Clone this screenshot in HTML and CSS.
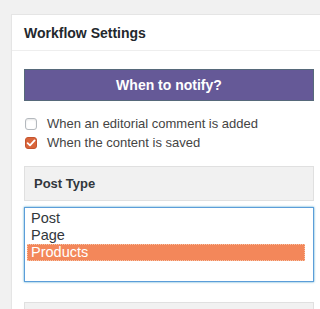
FILE: index.html
```
<!DOCTYPE html>
<html lang="en">
<head>
  <meta charset="UTF-8" />
  <title>Workflow Settings</title>
  <link rel="stylesheet" href="styles.css">
</head>
<body>
  <div class="postbox">
    <h2 class="postbox-title">Workflow Settings</h2>
    <div class="inside">
      <div class="section-bar">When to notify?</div>

      <div class="checks">
        <label class="check-row">
          <span class="checkbox"></span>
          When an editorial comment is added
        </label>
        <label class="check-row">
          <span class="checkbox checked">
            <svg width="10" height="10" viewBox="0 0 10 10"><path d="M1.6 5.2 L4 7.4 L8.6 2.4" fill="none" stroke="#fff" stroke-width="1.8" stroke-linecap="round" stroke-linejoin="round"/></svg>
          </span>
          When the content is saved
        </label>
      </div>

      <div class="field-head">Post Type</div>
      <div class="select-box">
        <div class="option">Post</div>
        <div class="option">Page</div>
        <div class="option selected">Products</div>
      </div>

      <div class="field-head next"></div>
    </div>
  </div>
</body>
</html>
```

FILE: styles.css
```
body {
  margin: 0;
  padding: 14px 0 0 11px;
  background: #f1f1f1;
  font-family: "Liberation Sans", Arial, sans-serif;
  color: #23282d;
  overflow: hidden;
  height: 309px;
  box-sizing: border-box;
}

.postbox {
  width: 314px;
  background: #fff;
  border: 1px solid #e5e5e5;
  box-shadow: 0 1px 1px rgba(0, 0, 0, 0.04);
}

.postbox-title {
  margin: 0;
  height: 35px;
  padding: 0 12px;
  display: flex;
  align-items: center;
  font-size: 14px;
  font-weight: bold;
  border-bottom: 1px solid #eee;
}

.inside {
  padding: 18px 12px 0;
}

.section-bar {
  height: 30px;
  display: flex;
  align-items: center;
  justify-content: center;
  background: #655997;
  border: 1px solid #56697a;
  color: #fff;
  font-size: 14px;
  font-weight: bold;
}

.checks {
  display: flex;
  flex-direction: column;
  padding: 13px 0 14px 1px;
}

.check-row {
  display: flex;
  align-items: center;
  height: 19px;
  font-size: 13px;
  color: #444;
}

.checkbox {
  width: 10px;
  height: 10px;
  border: 1px solid #b4b9be;
  border-radius: 3px;
  background: #fff;
  box-shadow: inset 0 1px 2px rgba(0, 0, 0, 0.1);
  margin-right: 10px;
  display: flex;
  align-items: center;
  justify-content: center;
}

.checkbox.checked {
  background: #d9643a;
  border-color: #c4552e;
  box-shadow: none;
}

.field-head {
  height: 33px;
  background: #f1f1f1;
  border: 1px solid #e0e0e0;
  display: flex;
  align-items: center;
  padding-left: 9px;
  font-size: 13px;
  font-weight: bold;
  color: #32373c;
}

.field-head.next {
  margin-top: 20px;
}

.select-box {
  margin-top: 6px;
  height: 71px;
  border: 1px solid #5b9dd9;
  box-shadow: 0 0 2px rgba(30, 140, 190, 0.8);
  padding: 2px 8px 0 2px;
  box-sizing: content-box;
}

.option {
  height: 17px;
  line-height: 17px;
  padding-left: 4px;
  font-size: 14.5px;
  color: #32373c;
}

.option.selected {
  background: #f3875a;
  color: #fff;
  outline: 1px dotted #f6c3a8;
  outline-offset: -1px;
}
```
